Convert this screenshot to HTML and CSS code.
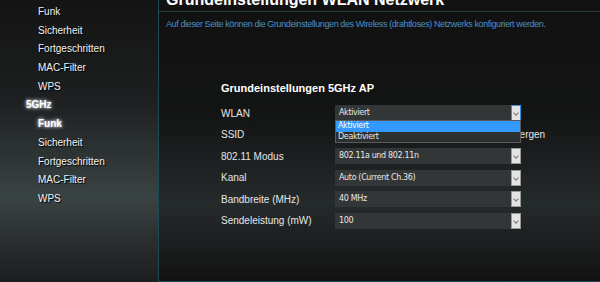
FILE: index.html
```html
<!DOCTYPE html>
<html lang="de">
<head>
    <meta charset="UTF-8">
    <title>Grundeinstellungen WLAN Netzwerk</title>
    <link rel="stylesheet" href="styles.css">
</head>
<body>

<div class="page">
    <nav class="side">
        <a class="sub">Funk</a>
        <a class="sub">Sicherheit</a>
        <a class="sub">Fortgeschritten</a>
        <a class="sub">MAC-Filter</a>
        <a class="sub">WPS</a>
        <a class="group active">5GHz</a>
        <a class="sub active">Funk</a>
        <a class="sub">Sicherheit</a>
        <a class="sub">Fortgeschritten</a>
        <a class="sub">MAC-Filter</a>
        <a class="sub">WPS</a>
    </nav>

    <main class="content">
        <h1>Grundeinstellungen WLAN Netzwerk</h1>
        <p class="intro">Auf dieser Seite können die Grundeinstellungen des Wireless (drahtloses) Netzwerks konfiguriert werden.</p>

        <section class="form">
            <h2>Grundeinstellungen 5GHz AP</h2>

            <div class="row">
                <span class="label">WLAN</span>
                <div class="field">
                    <div class="select open">Aktiviert<span class="arrow"></span></div>
                    <ul class="options">
                        <li class="selected">Aktiviert</li>
                        <li>Deaktiviert</li>
                    </ul>
                </div>
            </div>
            <div class="row">
                <span class="label">SSID</span>
                <div class="field">
                    <div class="input">WLAN-5G</div>
                    <span class="check">SSID verbergen</span>
                </div>
            </div>
            <div class="row">
                <span class="label">802.11 Modus</span>
                <div class="field"><div class="select">802.11a und 802.11n<span class="arrow"></span></div></div>
            </div>
            <div class="row">
                <span class="label">Kanal</span>
                <div class="field"><div class="select">Auto (Current Ch.36)<span class="arrow"></span></div></div>
            </div>
            <div class="row">
                <span class="label">Bandbreite (MHz)</span>
                <div class="field"><div class="select">40 MHz<span class="arrow"></span></div></div>
            </div>
            <div class="row">
                <span class="label">Sendeleistung (mW)</span>
                <div class="field"><div class="select">100<span class="arrow"></span></div></div>
            </div>
        </section>
    </main>
</div>

</body>
</html>
```

FILE: styles.css
```css
body, html {
    margin: 0;
    height: 100%;
    overflow: hidden;
    background: #121212;
    font-family: "Liberation Sans", Arial, sans-serif;
}
.page {
    display: flex;
    height: 282px;
}

/* left menu */
.side {
    width: 158px;
    flex-shrink: 0;
    padding-top: 3px;
    box-sizing: border-box;
    background: linear-gradient(to bottom, #141414 0%, #1d1f20 35%, #3a4343 70%, #2a2e2f 85%, #1c1d1e 100%);
    display: flex;
    flex-direction: column;
}
.side a {
    display: block;
    height: 18.7px;
    line-height: 18.7px;
    font-size: 10px;
    color: #f2f2f2;
    text-shadow: 1px 1px 1px #000;
}
.side a.sub {
    padding-left: 38px;
}
.side a.group {
    padding-left: 26px;
}
.side a.active {
    font-weight: bold;
    color: #fff;
    text-shadow: 0 0 3px #fff, 0 0 5px rgba(255,255,255,0.6);
}

/* main panel */
.content {
    flex: 1;
    height: 281px;
    border-left: 1px solid #1d4a51;
    border-bottom: 1px solid #1d4a51;
    background: linear-gradient(to bottom, #111111 0%, #131414 40%, #252a2b 72%, #1b1d1e 88%, #121212 100%);
    overflow: hidden;
}
.content h1 {
    margin: -10px 0 0 0;
    padding: 0 0 1px 7px;
    font-size: 16px;
    line-height: 20px;
    color: #fff;
    border-bottom: 1px solid #2a3d45;
}
.intro {
    margin: 7px 0 0 7px;
    font-size: 9px;
    letter-spacing: -0.4px;
    color: #4b8fc6;
}
.form {
    margin: 52px 0 0 62px;
}
.form h2 {
    margin: 0 0 10px 0;
    font-size: 11px;
    line-height: 14px;
    color: #fff;
}
.row {
    display: flex;
    align-items: center;
    height: 16px;
    margin-bottom: 5.6px;
}
.label {
    width: 114px;
    font-size: 10px;
    color: #e6e6e6;
}
.field {
    position: relative;
    display: flex;
    align-items: center;
}
.select, .input {
    position: relative;
    width: 186px;
    height: 16px;
    line-height: 16px;
    padding-left: 4px;
    box-sizing: border-box;
    background: #333637;
    font-family: "DejaVu Sans", sans-serif;
    font-size: 8px;
    letter-spacing: -0.35px;
    color: #e8e8e8;
}
.input {
    width: 130px;
}
.check {
    margin-left: 9px;
    font-size: 10px;
    color: #e6e6e6;
    white-space: nowrap;
}
.arrow {
    position: absolute;
    right: 0;
    top: 0;
    width: 10px;
    height: 16px;
    box-sizing: border-box;
    background: #e4e4e4;
    border: 1px solid #9a9a9a;
}
.arrow::after {
    content: "";
    position: absolute;
    left: 2px;
    top: 5px;
    width: 3px;
    height: 3px;
    border-right: 1px solid #777;
    border-bottom: 1px solid #777;
    transform: rotate(45deg);
}
.select.open .arrow {
    border-color: #3a8fd6;
}

/* opened dropdown list */
.options {
    position: absolute;
    top: 15px;
    left: 0;
    width: 186px;
    margin: 0;
    padding: 0;
    list-style: none;
    box-sizing: border-box;
    border: 1px solid #5a5a5a;
    background: #2d3031;
    z-index: 10;
}
.options li {
    height: 10.5px;
    line-height: 10.5px;
    padding-left: 2px;
    font-family: "DejaVu Sans", sans-serif;
    font-size: 8px;
    letter-spacing: -0.35px;
    color: #e8e8e8;
}
.options li.selected {
    background: #3399ff;
    color: #fff;
}
```
